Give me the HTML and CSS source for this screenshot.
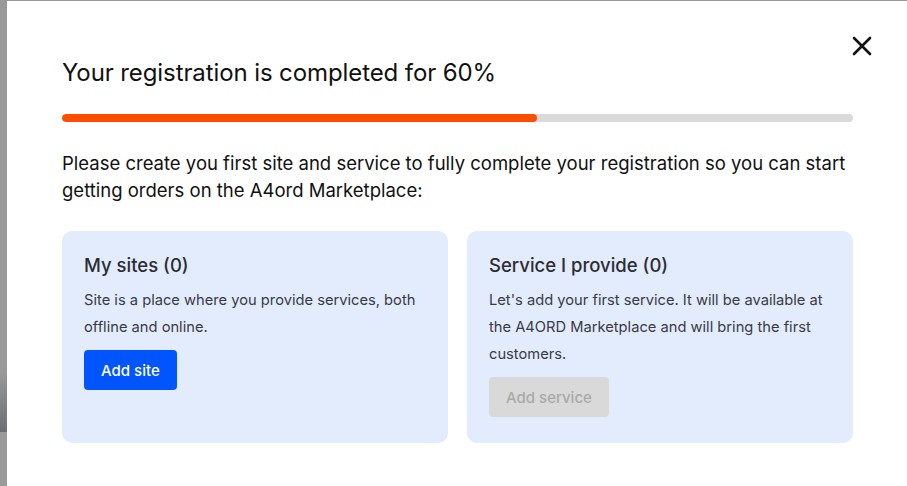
FILE: index.html
```html
<!DOCTYPE html>
<html lang="en">
<head>
  <meta charset="UTF-8">
  <title>Registration</title>
  <meta name="viewport" content="width=device-width, initial-scale=1.0">
  <link rel="stylesheet" href="styles.css">
</head>
<body>

  <!-- Modal de registro -->
  <div class="modal">
    <button class="close" type="button" aria-label="Close">
      <svg width="20" height="20" viewBox="0 0 20 20">
        <path d="M2 2 L18 18 M18 2 L2 18" stroke="#111" stroke-width="2.6" stroke-linecap="round"/>
      </svg>
    </button>

    <h1>Your registration is completed for 60%</h1>

    <div class="progress">
      <div class="progress-fill" style="width: 60%"></div>
    </div>

    <p class="intro">Please create you first site and service to fully complete your registration so you can start getting orders on the A4ord Marketplace:</p>

    <div class="cards">
      <div class="card">
        <h2>My sites (0)</h2>
        <p>Site is a place where you provide services, both offline and online.</p>
        <button class="btn" type="button">Add site</button>
      </div>
      <div class="card">
        <h2>Service I provide (0)</h2>
        <p>Let's add your first service. It will be available at the A4ORD Marketplace and will bring the first customers.</p>
        <button class="btn btn-disabled" type="button" disabled>Add service</button>
      </div>
    </div>
  </div>

</body>
</html>
```

FILE: styles.css
```css
html, body {
  height: 100%;
}

body {
  margin: 0;
  font-family: 'Inter', sans-serif;
  color: #111;
  background: linear-gradient(to bottom, #999 0, #999 372px, #6c6e76 432px, #999 432px);
  overflow: hidden;
}

/* Caixa branca do modal */
.modal {
  position: relative;
  margin: 1px 0 0 7px;
  height: calc(100% - 1px);
  box-sizing: border-box;
  background: #fff;
  padding: 57px 54px 0 55px;
}

.close {
  position: absolute;
  top: 35px;
  right: 35px;
  background: none;
  border: none;
  padding: 0;
  width: 20px;
  height: 20px;
  cursor: pointer;
}

h1 {
  margin: 0;
  font-size: 24px;
  font-weight: 400;
  line-height: 30px;
  letter-spacing: -0.1px;
}

.progress {
  margin-top: 26px;
  height: 8px;
  background: #dadada;
  border-radius: 4px;
  overflow: hidden;
}

.progress-fill {
  height: 100%;
  background: #ff4d00;
  border-radius: 4px;
}

.intro {
  margin: 28px 0 0;
  font-size: 18.5px;
  line-height: 27px;
}

.cards {
  display: grid;
  grid-template-columns: 1fr 1fr;
  gap: 19px;
  margin-top: 27px;
}

.card {
  background: #e3ecfd;
  border-radius: 10px;
  padding: 22px 22px 26px;
  height: 212px;
  box-sizing: border-box;
  color: #2c2c34;
}

.card h2 {
  margin: 0;
  font-size: 18.5px;
  font-weight: 500;
  line-height: 24px;
}

.card p {
  margin: 10px 0 9px;
  font-size: 14.7px;
  line-height: 27px;
  color: #3a3a44;
}

.btn {
  font-family: inherit;
  font-size: 15px;
  font-weight: 500;
  height: 40px;
  padding: 0 17px;
  border: none;
  border-radius: 4px;
  background: #0055ff;
  color: #fff;
  cursor: pointer;
}

.btn-disabled {
  background: #d9d9d9;
  color: #a9a9a9;
  cursor: default;
}
```
